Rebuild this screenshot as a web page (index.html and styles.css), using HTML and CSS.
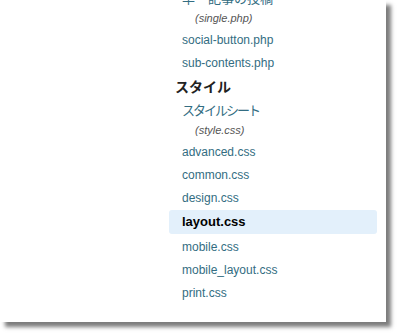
FILE: index.html
```html
<!DOCTYPE html>
<html lang="ja">

<head>
    <meta charset="UTF-8">
    <meta name="viewport" content="width=device-width, initial-scale=1.0">
    <title>テンプレート一覧</title>
    <link rel="stylesheet" href="styles.css">
</head>

<body>
    <div class="panel">
        <ul class="file-list">
            <li class="item item-ja">単一記事の投稿</li>
            <li class="note">(single.php)</li>
            <li class="item">social-button.php</li>
            <li class="item">sub-contents.php</li>
            <li class="heading">スタイル</li>
            <li class="item item-ja item-tight">スタイルシート</li>
            <li class="note">(style.css)</li>
            <li class="item">advanced.css</li>
            <li class="item">common.css</li>
            <li class="item">design.css</li>
            <li class="item current">layout.css</li>
            <li class="item">mobile.css</li>
            <li class="item">mobile_layout.css</li>
            <li class="item">print.css</li>
        </ul>
    </div>
</body>

</html>
```

FILE: styles.css
```css
body {
    margin: 0;
    padding-bottom: 14px;
    min-height: 322px;
    background-color: #fff;
    font-family: "Liberation Sans", "Noto Sans CJK JP", sans-serif;
}

.panel {
    width: 386px;
    background-color: #fff;
    overflow: hidden;
    box-shadow: 5px 5px 4px #7c7c7c;
}

.file-list {
    list-style: none;
    margin: -11px 0 0 0;
    padding: 0 9px 17px 169px;
}

.item {
    padding-left: 13px;
    font-size: 12px;
    line-height: 22px;
    margin-bottom: 1px;
    color: #336d82;
}

.item-ja {
    font-size: 13px;
    line-height: 20px;
    margin-bottom: 0;
}

.item-tight {
    letter-spacing: -2px;
}

.note {
    padding-left: 26px;
    font-size: 11px;
    font-style: italic;
    line-height: 18px;
    margin-bottom: 2px;
    color: #555;
}

.heading {
    margin-left: 6px;
    font-family: "Noto Sans CJK JP", sans-serif;
    font-size: 14px;
    font-weight: bold;
    line-height: 22px;
    margin-bottom: 4px;
    color: #222;
}

.current {
    background-color: #e3f0fb;
    border-radius: 3px;
    font-size: 13px;
    font-weight: bold;
    line-height: 24px;
    margin-bottom: 2px;
    color: #000;
}
```
